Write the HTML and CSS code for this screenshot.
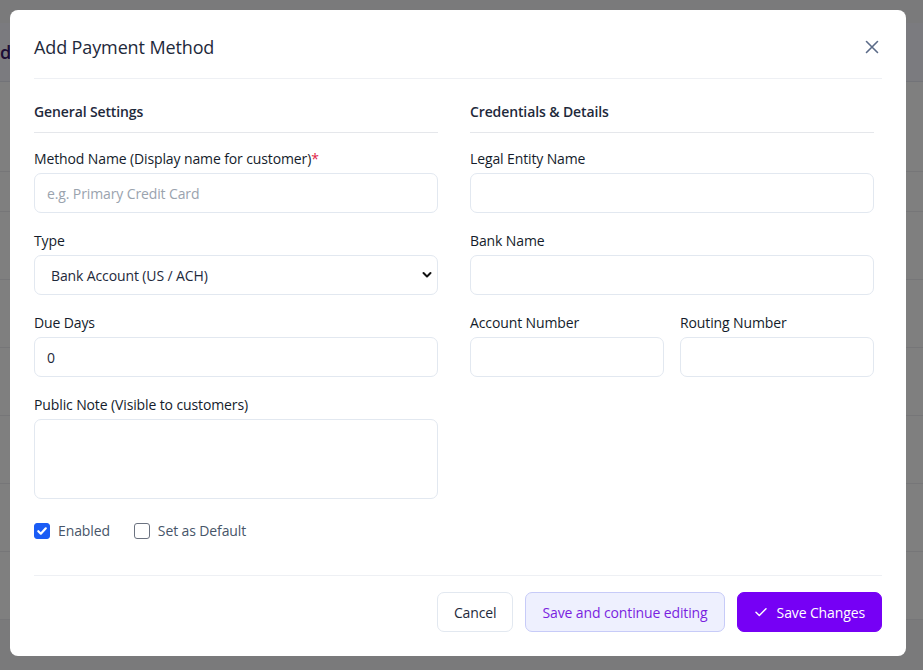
FILE: index.html
```html
<!DOCTYPE html>
<html lang="en">
<head>
<meta charset="utf-8">
<title>Add Payment Method</title>
<link rel="stylesheet" href="styles.css">
</head>
<body>
<div class="page">
  <div class="page-card">
    <div class="page-head"><span class="page-title">ds</span></div>
    <div class="page-row r1"></div>
    <div class="page-row r2"></div>
    <div class="page-row r3"></div>
    <div class="page-row r3"></div>
    <div class="page-row r3"></div>
    <div class="page-row r3"></div>
    <div class="page-row r3"></div>
    <div class="page-row r3"></div>
  </div>
</div>
<div class="overlay">
  <div class="modal">
    <div class="modal-head">
      <h2 class="modal-title">Add Payment Method</h2>
      <button class="close" aria-label="Close">
        <svg width="14" height="14" viewBox="0 0 14 14"><path d="M1.5 1.5 L12.5 12.5 M12.5 1.5 L1.5 12.5" stroke="#5b6b88" stroke-width="1.6" stroke-linecap="round" fill="none"/></svg>
      </button>
    </div>
    <div class="modal-body">
      <div class="col">
        <h3 class="section">General Settings</h3>
        <div class="field">
          <label>Method Name (Display name for customer)<span class="req">*</span></label>
          <input type="text" placeholder="e.g. Primary Credit Card">
        </div>
        <div class="field">
          <label>Type</label>
          <div class="select">
            <span>Bank Account (US / ACH)</span>
            <svg width="10" height="8" viewBox="0 0 10 8"><path d="M1.5 2 L5 5.5 L8.5 2" stroke="#111" stroke-width="2" fill="none" stroke-linecap="round" stroke-linejoin="round"/></svg>
          </div>
        </div>
        <div class="field">
          <label>Due Days</label>
          <input type="text" value="0">
        </div>
        <div class="field">
          <label>Public Note (Visible to customers)</label>
          <textarea></textarea>
        </div>
        <div class="checks">
          <label class="check"><span class="box on"><svg width="12" height="12" viewBox="0 0 12 12"><path d="M2.3 6.2 L4.8 8.7 L9.8 3.3" stroke="#fff" stroke-width="2.2" fill="none" stroke-linecap="round" stroke-linejoin="round"/></svg></span>Enabled</label>
          <label class="check"><span class="box"></span>Set as Default</label>
        </div>
      </div>
      <div class="col">
        <h3 class="section">Credentials &amp; Details</h3>
        <div class="field">
          <label>Legal Entity Name</label>
          <input type="text">
        </div>
        <div class="field">
          <label>Bank Name</label>
          <input type="text">
        </div>
        <div class="pair">
          <div class="field">
            <label>Account Number</label>
            <input type="text">
          </div>
          <div class="field">
            <label>Routing Number</label>
            <input type="text">
          </div>
        </div>
      </div>
    </div>
    <div class="modal-foot">
      <button class="btn btn-cancel">Cancel</button>
      <button class="btn btn-soft">Save and continue editing</button>
      <button class="btn btn-primary"><svg width="14" height="14" viewBox="0 0 14 14"><path d="M2 7.3 L5.3 10.5 L12 3.8" stroke="#fff" stroke-width="1.5" fill="none" stroke-linecap="round" stroke-linejoin="round"/></svg>Save Changes</button>
    </div>
  </div>
</div>
</body>
</html>
```
FILE: styles.css
```css
* { box-sizing: border-box; }
html, body { margin: 0; padding: 0; }
body {
  width: 923px;
  height: 670px;
  overflow: hidden;
  background: #f4f4f6;
  font-family: "Open Sans", "Noto Sans", sans-serif;
  letter-spacing: -0.12px;
  color: #1e293b;
}
.page { padding: 23px 0 0; }
.page-card { background: #fff; }
.page-head {
  height: 59px;
  display: flex;
  align-items: center;
  padding-left: 0;
  background: #f6f7ff;
  border-bottom: 1px solid #e5e7f0;
}
.page-title { font-size: 18px; font-weight: 600; color: #3b1a6b; }
.page-row { border-bottom: 1px solid #ececf0; }
.r1 { height: 90px; }
.r2 { height: 40px; }
.r3 { height: 68px; }

.overlay {
  position: fixed;
  inset: 0;
  background: rgba(0, 0, 0, 0.5);
  padding: 10px;
}
.modal {
  width: 896px;
  height: 646px;
  background: #fff;
  border-radius: 8px;
  display: flex;
  flex-direction: column;
}
.modal-head {
  margin: 0 24px;
  padding: 24px 0 18px;
  border-bottom: 1px solid #eef0f4;
  display: flex;
  align-items: center;
  justify-content: space-between;
}
.modal-title {
  margin: 0;
  font-size: 18px;
  line-height: 26px;
  font-weight: 400;
  color: #1e293b;
}
.close {
  border: 0;
  background: none;
  padding: 0;
  margin-right: 3px;
  width: 14px;
  height: 14px;
  display: flex;
}
.modal-body {
  margin: 0 24px;
  padding: 23px 8px 0 0;
  display: grid;
  grid-template-columns: minmax(0, 1fr) minmax(0, 1fr);
  column-gap: 32px;
  height: 497px;
  border-bottom: 1px solid #eef0f4;
  flex: none;
}
.section {
  margin: 0 0 16px;
  padding-bottom: 10px;
  border-bottom: 1px solid #e5e7eb;
  font-size: 14px;
  line-height: 20px;
  font-weight: 600;
  color: #1e293b;
}
.field { display: flex; flex-direction: column; margin-bottom: 18px; min-width: 0; }
.field label {
  font-size: 14px;
  line-height: 20px;
  margin-bottom: 4px;
  color: #141c2b;
  font-weight: 500;
}
.req { color: #e11d48; }
.field input, .select, .field textarea {
  width: 100%;
  height: 40px;
  border: 1px solid #e2e8f0;
  border-radius: 7px;
  padding: 0 12px;
  font-family: inherit;
  font-size: 14px;
  letter-spacing: -0.12px;
  color: #1e293b;
  background: #fff;
  outline: none;
}
.field input::placeholder { color: #9aa3ae; }
.field textarea { height: 80px; resize: none; padding: 8px 12px; }
.select {
  display: flex;
  align-items: center;
  justify-content: space-between;
  padding: 0 5px 0 16px;
}
.pair { display: grid; grid-template-columns: minmax(0, 1fr) minmax(0, 1fr); column-gap: 16px; }
.checks { display: flex; gap: 24px; margin-top: 22px; }
.check {
  display: flex;
  align-items: center;
  gap: 8px;
  font-size: 14px;
  line-height: 20px;
  color: #475569;
}
.box {
  width: 16px;
  height: 16px;
  border: 1px solid #6b7280;
  border-radius: 3px;
  display: flex;
  align-items: center;
  justify-content: center;
  background: #fff;
}
.box.on { background: #1a5cf5; border-color: #1a5cf5; }
.modal-foot {
  padding: 16px 24px 24px;
  display: flex;
  justify-content: flex-end;
  gap: 12px;
}
.btn {
  height: 40px;
  border-radius: 7px;
  font-family: inherit;
  font-size: 14px;
  letter-spacing: -0.12px;
  font-weight: 500;
  padding: 0 16px;
  display: flex;
  align-items: center;
  gap: 9px;
  cursor: pointer;
}
.btn-cancel { background: #fff; border: 1px solid #e2e8f0; color: #1e293b; }
.btn-soft { background: #eef0fe; border: 1px solid #c7cbf8; color: #7a1fe0; }
.btn-primary { background: #7600f5; border: 1px solid #7600f5; color: #fff; }
```
